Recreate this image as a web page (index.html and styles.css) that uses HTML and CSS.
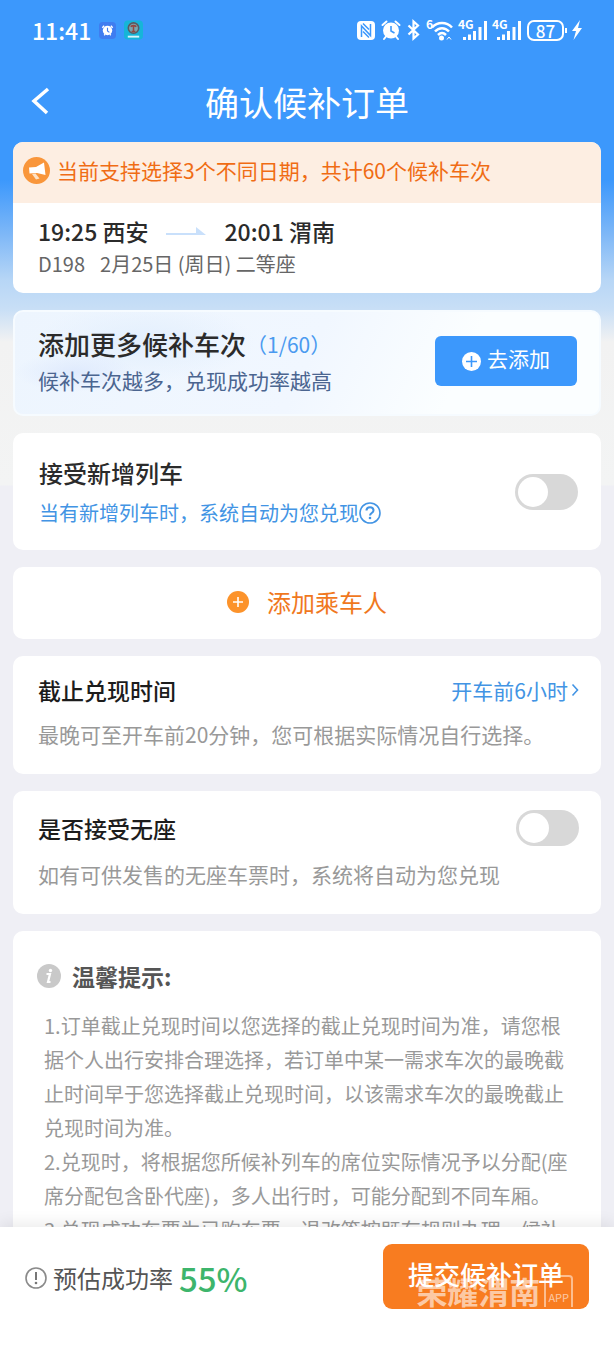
FILE: index.html
```html
<!DOCTYPE html>
<html lang="zh-CN">

<head>
    <meta charset="UTF-8">
    <meta name="viewport" content="width=device-width, initial-scale=1.0">
    <title>确认候补订单</title>
    <link rel="stylesheet" href="styles.css">
</head>

<body>

    <div class="page">
        <!-- Status Bar -->
        <div class="status-bar">
            <span class="clock">11:41</span>
            <svg class="app-icon" viewBox="0 0 18 18" aria-hidden="true">
                <rect width="18" height="18" rx="4" fill="#3f7df0"/>
                <circle cx="9" cy="9" r="5" fill="#fff"/>
                <path d="M3.5 6l2-2M14.5 6l-2-2M5.5 14l1-1M12.5 14l-1-1" stroke="#fff" stroke-width="1.5"/>
                <path d="M9 6v3.5l2 1.5" fill="none" stroke="#3f7df0" stroke-width="1.2"/>
            </svg>
            <svg class="app-icon rail-icon" viewBox="0 0 20 20" aria-hidden="true">
                <rect width="20" height="20" rx="4" fill="#16b5d8"/>
                <circle cx="10" cy="8" r="5.5" fill="#79a5ae" stroke="#5b5a61" stroke-width="1.6"/>
                <path d="M7 6.5c2-1.5 4-1.5 6 0M10 6v5M8 11.5h4" fill="none" stroke="#94463f" stroke-width="1.6"/>
                <path d="M4 17h12" stroke="#d8f4fa" stroke-width="2"/>
            </svg>
            <div class="status-right">
                <svg width="18" height="19" viewBox="0 0 18 19" aria-hidden="true">
                    <rect width="18" height="19" rx="4" fill="#fff"/>
                    <path d="M4.5 16V5l9 9.5V3M6 2.500l6 6M6 10.500l6 6" fill="none" stroke="#3c98fc" stroke-width="1.5"/>
                </svg>
                <svg width="20" height="20" viewBox="0 0 20 20" aria-hidden="true">
                    <circle cx="10" cy="10.5" r="8" fill="#fff"/>
                    <path d="M1.5 5l4-3.5M18.5 5l-4-3.5M5 16.5l-2 2.5M15 16.5l2 2.5" stroke="#fff" stroke-width="2" stroke-linecap="round"/>
                    <path d="M10 6v5l3.5 2" fill="none" stroke="#3c98fc" stroke-width="1.6"/>
                </svg>
                <svg width="13" height="20" viewBox="0 0 13 20" aria-hidden="true">
                    <path d="M1.5 5.5l9.5 9L6.500 18.500V1.5L11 5.5l-9.5 9" fill="none" stroke="#fff" stroke-width="2.2"/>
                </svg>
                <svg width="27" height="22" viewBox="0 0 27 22" aria-hidden="true">
                    <text x="0" y="10" class="svg-small">6</text>
                    <path d="M6 8.500c5.5-6 14.500-6 20 0M9 12.500c4-4.500 10-4.500 14 0M12 16c2.5-2.500 5.500-2.500 8 0" fill="none" stroke="#fff" stroke-width="2.5"/>
                    <circle cx="15.5" cy="19" r="2.500" fill="#fff"/>
                    <path d="M21 20.500l2-2.500 2 2.500" fill="none" stroke="#fff" stroke-width="1"/>
                </svg>
                <svg width="28" height="22" viewBox="0 0 28 22" aria-hidden="true">
                    <path d="M5.500 18v3M10.500 15.500v5.500M15.500 12v9M21 8v13M26.500 2v19" stroke="#fff" stroke-width="3"/>
                    <text x="-1" y="10" class="svg-small">4G</text>
                </svg>
                <svg width="28" height="22" viewBox="0 0 28 22" aria-hidden="true">
                    <path d="M5.500 18v3M10.500 15.500v5.500M15.500 12v9M21 8v13M26.500 2v19" stroke="#fff" stroke-width="3"/>
                    <text x="-1" y="10" class="svg-small">4G</text>
                </svg>
                <span class="battery">87</span>
                <svg width="10" height="20" viewBox="0 0 10 20" aria-hidden="true">
                    <path d="M8 0L0 11h4L1.5 20 10 8H6z" fill="#fff"/>
                </svg>
            </div>
        </div>

        <!-- Title Bar -->
        <header class="title-bar">
            <button type="button" class="back" aria-label="返回">
                <svg width="20" height="28" viewBox="0 0 20 28" aria-hidden="true">
                    <path d="M17 2L3 14l13 12" fill="none" stroke="#fff" stroke-width="3.5"/>
                </svg>
            </button>
            <h1>确认候补订单</h1>
        </header>

        <main class="content">
            <!-- Selected Train -->
            <section class="card train">
                <p class="notice">
                    <svg width="27" height="27" viewBox="0 0 27 27" aria-hidden="true">
                        <circle cx="13.5" cy="13.5" r="13.5" fill="#f9963b"/>
                        <path d="M6 10.5l7-.5 8-4.5 1.500 12.500-8.5-2-7.500.5z" fill="#fff"/>
                        <path d="M9 17l3.5-.5 4 5-3.500 1z" fill="#fde3c8"/>
                    </svg>
                    当前支持选择3个不同日期，共计60个候补车次
                </p>
                <div class="train-body">
                    <h2 class="route">
                        <span>19:25 西安</span>
                        <svg width="40" height="10" viewBox="0 0 40 10" aria-hidden="true">
                            <path d="M0 7h30V1l10 8H0z" fill="#c9e0fb"/>
                        </svg>
                        <span>20:01 渭南</span>
                    </h2>
                    <p class="train-info"><span>D198</span><span>2月25日 (周日) 二等座</span></p>
                </div>
            </section>

            <!-- Add More Trains -->
            <section class="card more">
                <div>
                    <h2>添加更多候补车次<span class="count">（1/60）</span></h2>
                    <p>候补车次越多，兑现成功率越高</p>
                </div>
                <button type="button" class="add-train">
                    <svg width="19" height="19" viewBox="0 0 19 19" aria-hidden="true">
                        <circle cx="9.5" cy="9.5" r="9.5" fill="#fff"/>
                        <path d="M9.5 4v11M4 9.5h11" stroke="#3c98fc" stroke-width="1.6"/>
                    </svg>
                    <span>去添加</span>
                </button>
            </section>

            <!-- Accept New Trains -->
            <section class="card new-trains">
                <div>
                    <h2><label for="new-trains">接受新增列车</label></h2>
                    <p>
                        当有新增列车时，系统自动为您兑现
                        <svg width="22" height="22" viewBox="0 0 22 22" aria-hidden="true">
                            <circle cx="11" cy="11" r="10" fill="none" stroke="#4294e4" stroke-width="1.6"/>
                            <path d="M7.5 8.5c0-4.5 7-4.5 7 0 0 2.5-3.5 2.5-3.5 5" fill="none" stroke="#4294e4" stroke-width="2"/>
                            <circle cx="11" cy="16" r="1.3" fill="#4294e4"/>
                        </svg>
                    </p>
                </div>
                <input type="checkbox" class="switch" id="new-trains">
            </section>

            <!-- Add Passenger -->
            <button type="button" class="card passenger">
                <svg width="22" height="22" viewBox="0 0 22 22" aria-hidden="true">
                    <circle cx="11" cy="11" r="11" fill="#fc932b"/>
                    <path d="M11 6v10M6 11h10" stroke="#fff" stroke-width="1.6"/>
                </svg>
                <span>添加乘车人</span>
            </button>

            <!-- Deadline -->
            <section class="card option">
                <div class="option-head">
                    <h2>截止兑现时间</h2>
                    <a href="#" class="deadline">开车前6小时
                        <svg width="8" height="14" viewBox="0 0 8 14" aria-hidden="true">
                            <path d="M1.5 1.5l5 5.5-5 5.5" fill="none" stroke="#4294e4" stroke-width="1.6"/>
                        </svg>
                    </a>
                </div>
                <p>最晚可至开车前20分钟，您可根据实际情况自行选择。</p>
            </section>

            <!-- Standing Tickets -->
            <section class="card option standing">
                <div class="option-head">
                    <h2><label for="standing">是否接受无座</label></h2>
                    <input type="checkbox" class="switch" id="standing">
                </div>
                <p>如有可供发售的无座车票时，系统将自动为您兑现</p>
            </section>

            <!-- Tips -->
            <section class="card tips">
                <h2>
                    <svg width="24" height="24" viewBox="0 0 24 24" aria-hidden="true">
                        <circle cx="12" cy="12" r="12" fill="#c9c9c9"/>
                        <circle cx="13.5" cy="6.5" r="1.7" fill="#fff"/>
                        <path d="M9.5 10h3.500l-2 8h2.500" fill="none" stroke="#fff" stroke-width="2.2"/>
                    </svg>
                    温馨提示:
                </h2>
                <div class="tips-text">
                    <p>1.订单截止兑现时间以您选择的截止兑现时间为准，请您根据个人出行安排合理选择，若订单中某一需求车次的最晚截止时间早于您选择截止兑现时间，以该需求车次的最晚截止兑现时间为准。</p>
                    <p>2.兑现时，将根据您所候补列车的席位实际情况予以分配(座席分配包含卧代座)，多人出行时，可能分配到不同车厢。</p>
                    <p>3.兑现成功车票为已购车票，退改签按既有规则办理，候补</p>
                </div>
            </section>
        </main>

        <!-- Submit Bar -->
        <footer class="submit-bar">
            <p class="rate">
                <svg width="22" height="22" viewBox="0 0 22 22" aria-hidden="true">
                    <circle cx="11" cy="11" r="10" fill="none" stroke="#8a8a8a" stroke-width="1.6"/>
                    <path d="M11 5v8" stroke="#777" stroke-width="2"/>
                    <circle cx="11" cy="16" r="1.3" fill="#777"/>
                </svg>
                <span>预估成功率</span>
                <strong>55%</strong>
            </p>
            <div class="submit-wrap">
                <button type="submit" class="submit">提交候补订单</button>
                <div class="watermark">
                    <span>荣耀渭南</span>
                    <span class="watermark-app">APP</span>
                </div>
            </div>
        </footer>
    </div>

</body>

</html>
```
FILE: styles.css
```css
/* General Page Styles */
* {
    box-sizing: border-box;
}

body {
    font-family: "Noto Sans CJK SC", "Noto Sans", sans-serif;
    margin: 0;
    color: #2b2b2b;
}

h1, h2, p {
    margin: 0;
    font-weight: 400;
}

button {
    font-family: inherit;
    border: none;
    cursor: pointer;
}

svg {
    flex: none;
    overflow: visible;
}

.page {
    display: flex;
    flex-direction: column;
    height: 100vh;
    background: linear-gradient(#3c98fc 0, #3c98fc 180px, #7fb8f7 235px, #b7d6f6 280px, #c9dff6 310px, #f2f2f2 342px, #f3f4f4 485px, #efeff5 486px);
}

/* Status Bar */
.status-bar {
    display: flex;
    align-items: center;
    height: 60px;
    padding: 0 32px;
    color: #fff;
}

.clock {
    font-size: 23px;
    font-weight: 500;
}

.app-icon {
    width: 17px;
    height: 17px;
    margin-left: 8px;
}

.rail-icon {
    width: 19px;
    height: 20px;
}

.status-right {
    display: flex;
    align-items: center;
    gap: 6px;
    margin-left: auto;
}

.svg-small {
    font-size: 12px;
    font-weight: 700;
    fill: #fff;
}

.battery {
    display: flex;
    align-items: center;
    justify-content: center;
    position: relative;
    width: 37px;
    height: 21px;
    margin-right: 2px;
    border: 2px solid #fff;
    border-radius: 7px;
    font-size: 17px;
    font-weight: 500;
    line-height: 17px;
}

.battery::after {
    content: "";
    position: absolute;
    right: -5px;
    width: 2px;
    height: 5px;
    background-color: #fff;
}

/* Title Bar */
.title-bar {
    display: grid;
    grid-template-columns: 1fr auto 1fr;
    align-items: center;
    height: 82px;
    padding: 0 27px;
    color: #fff;
}

.back {
    display: flex;
    justify-self: start;
    padding: 4px;
    background: none;
}

.title-bar h1 {
    font-size: 34px;
    font-weight: 400;
}

/* Cards */
.content {
    display: flex;
    flex: 1;
    flex-direction: column;
    gap: 17px;
    min-height: 0;
    padding: 0 13px;
    overflow-y: auto;
    scrollbar-width: none;
}

.card {
    flex: none;
    border-radius: 10px;
    background-color: #fff;
}

.train {
    overflow: hidden;
}

.notice {
    display: flex;
    align-items: center;
    gap: 7px;
    padding: 11px 10px 16px;
    background-color: #fdeee2;
    color: #f06c14;
    font-size: 21px;
    line-height: 34px;
}

.train-body {
    padding: 12px 25px;
}

.route {
    display: flex;
    align-items: center;
    gap: 18px;
    font-size: 23px;
    font-weight: 500;
    line-height: 32px;
}

.train-info {
    display: flex;
    gap: 15px;
    color: #666;
    font-size: 20px;
    line-height: 34px;
}

/* Add More Trains */
.more {
    display: flex;
    align-items: center;
    justify-content: space-between;
    padding: 13px 22px 17px 23px;
    border: 2px solid #f6fbff;
    background-image:
        radial-gradient(ellipse 60px 20px at 60px 60px, #dfeafd, transparent),
        radial-gradient(ellipse 110px 40px at 130px 30px, #e3effd, transparent),
        linear-gradient(115deg, #edf5fe, #f1f7ff 50%, #fbfeff 75%);
}

.more h2 {
    display: flex;
    align-items: center;
    font-size: 26px;
    font-weight: 500;
    line-height: 38px;
}

.more .count {
    color: #4a9af0;
    font-size: 21px;
    font-weight: 400;
}

.more p {
    color: #4b6590;
    font-size: 21px;
    line-height: 34px;
}

.add-train {
    display: flex;
    align-items: center;
    gap: 6px;
    padding: 5px 27px 11px;
    border-radius: 6px;
    background-color: #3c98fc;
    color: #fff;
    font-size: 21px;
    line-height: 34px;
}

.add-train svg {
    margin-top: 6px;
}

/* Accept New Trains */
.new-trains {
    display: flex;
    align-items: center;
    justify-content: space-between;
    padding: 19px 23px 18px 26px;
}

.new-trains h2 {
    font-size: 24px;
    font-weight: 500;
    line-height: 42px;
}

.new-trains p {
    display: flex;
    align-items: center;
    color: #4294e4;
    font-size: 20px;
    line-height: 38px;
}

.switch {
    width: 63px;
    height: 36px;
    margin: 0;
    padding: 3px;
    border-radius: 18px;
    background-color: #d8d8d8;
    appearance: none;
    cursor: pointer;
}

.switch::before {
    content: "";
    display: block;
    width: 30px;
    height: 30px;
    border-radius: 50%;
    background-color: #fff;
}

.switch:checked {
    background-color: #3c98fc;
}

.switch:checked::before {
    margin-left: auto;
}

/* Add Passenger */
.passenger {
    display: flex;
    align-items: center;
    justify-content: center;
    gap: 18px;
    padding: 17px 18px 19px;
    color: #f0781e;
    font-size: 24px;
    line-height: 36px;
}

/* Deadline and Standing Tickets */
.option {
    padding: 15px 22px 23px 25px;
}

.standing {
    padding-top: 18px;
}

.option-head {
    display: flex;
    align-items: center;
    justify-content: space-between;
    margin-bottom: 8px;
    line-height: 38px;
}

.standing .option-head {
    margin-bottom: 10px;
}

.option h2 {
    color: #1c1c1c;
    font-size: 23px;
    font-weight: 500;
}

.deadline {
    display: flex;
    align-items: center;
    gap: 3px;
    color: #4294e4;
    font-size: 21px;
    text-decoration: none;
}

.option p {
    color: #999;
    font-size: 21px;
    line-height: 34px;
}

/* Tips */
.tips {
    padding: 26px 24px;
}

.tips h2 {
    display: flex;
    align-items: center;
    gap: 11px;
    margin-bottom: 14px;
    color: #555;
    font-size: 23px;
    font-weight: 700;
    line-height: 38px;
}

.tips-text {
    padding-left: 7px;
    color: #999;
    font-size: 20px;
    line-height: 34px;
}

/* Submit Bar */
.submit-bar {
    display: flex;
    align-items: flex-start;
    justify-content: space-between;
    padding: 17px 25px 39px;
    background-color: #fff;
    box-shadow: 0 -4px 14px rgba(0, 0, 0, 0.08);
    z-index: 1;
}

.rate {
    display: flex;
    align-items: center;
    gap: 6px;
    color: #555;
    font-size: 24px;
    line-height: 67px;
}

.rate strong {
    color: #3db56c;
    font-size: 33px;
    font-weight: 500;
    line-height: 60px;
}

.submit-wrap {
    position: relative;
}

.submit {
    padding: 12px 25px 17px;
    border-radius: 9px;
    background-color: #f87c20;
    color: #fff;
    font-size: 26px;
    font-weight: 500;
    line-height: 36px;
}

/* Site mark laid over the button */
.watermark {
    position: absolute;
    right: 16px;
    bottom: 2px;
    display: flex;
    align-items: flex-end;
    gap: 4px;
    color: rgba(255, 255, 255, 0.6);
    font-size: 31px;
    font-weight: 700;
    line-height: 32px;
    pointer-events: none;
}

.watermark-app {
    padding: 10px 2px 0;
    border: 2px solid rgba(255, 255, 255, 0.5);
    border-bottom: none;
    border-radius: 4px 4px 0 0;
    font-size: 11px;
    font-weight: 400;
    line-height: 20px;
}
```
